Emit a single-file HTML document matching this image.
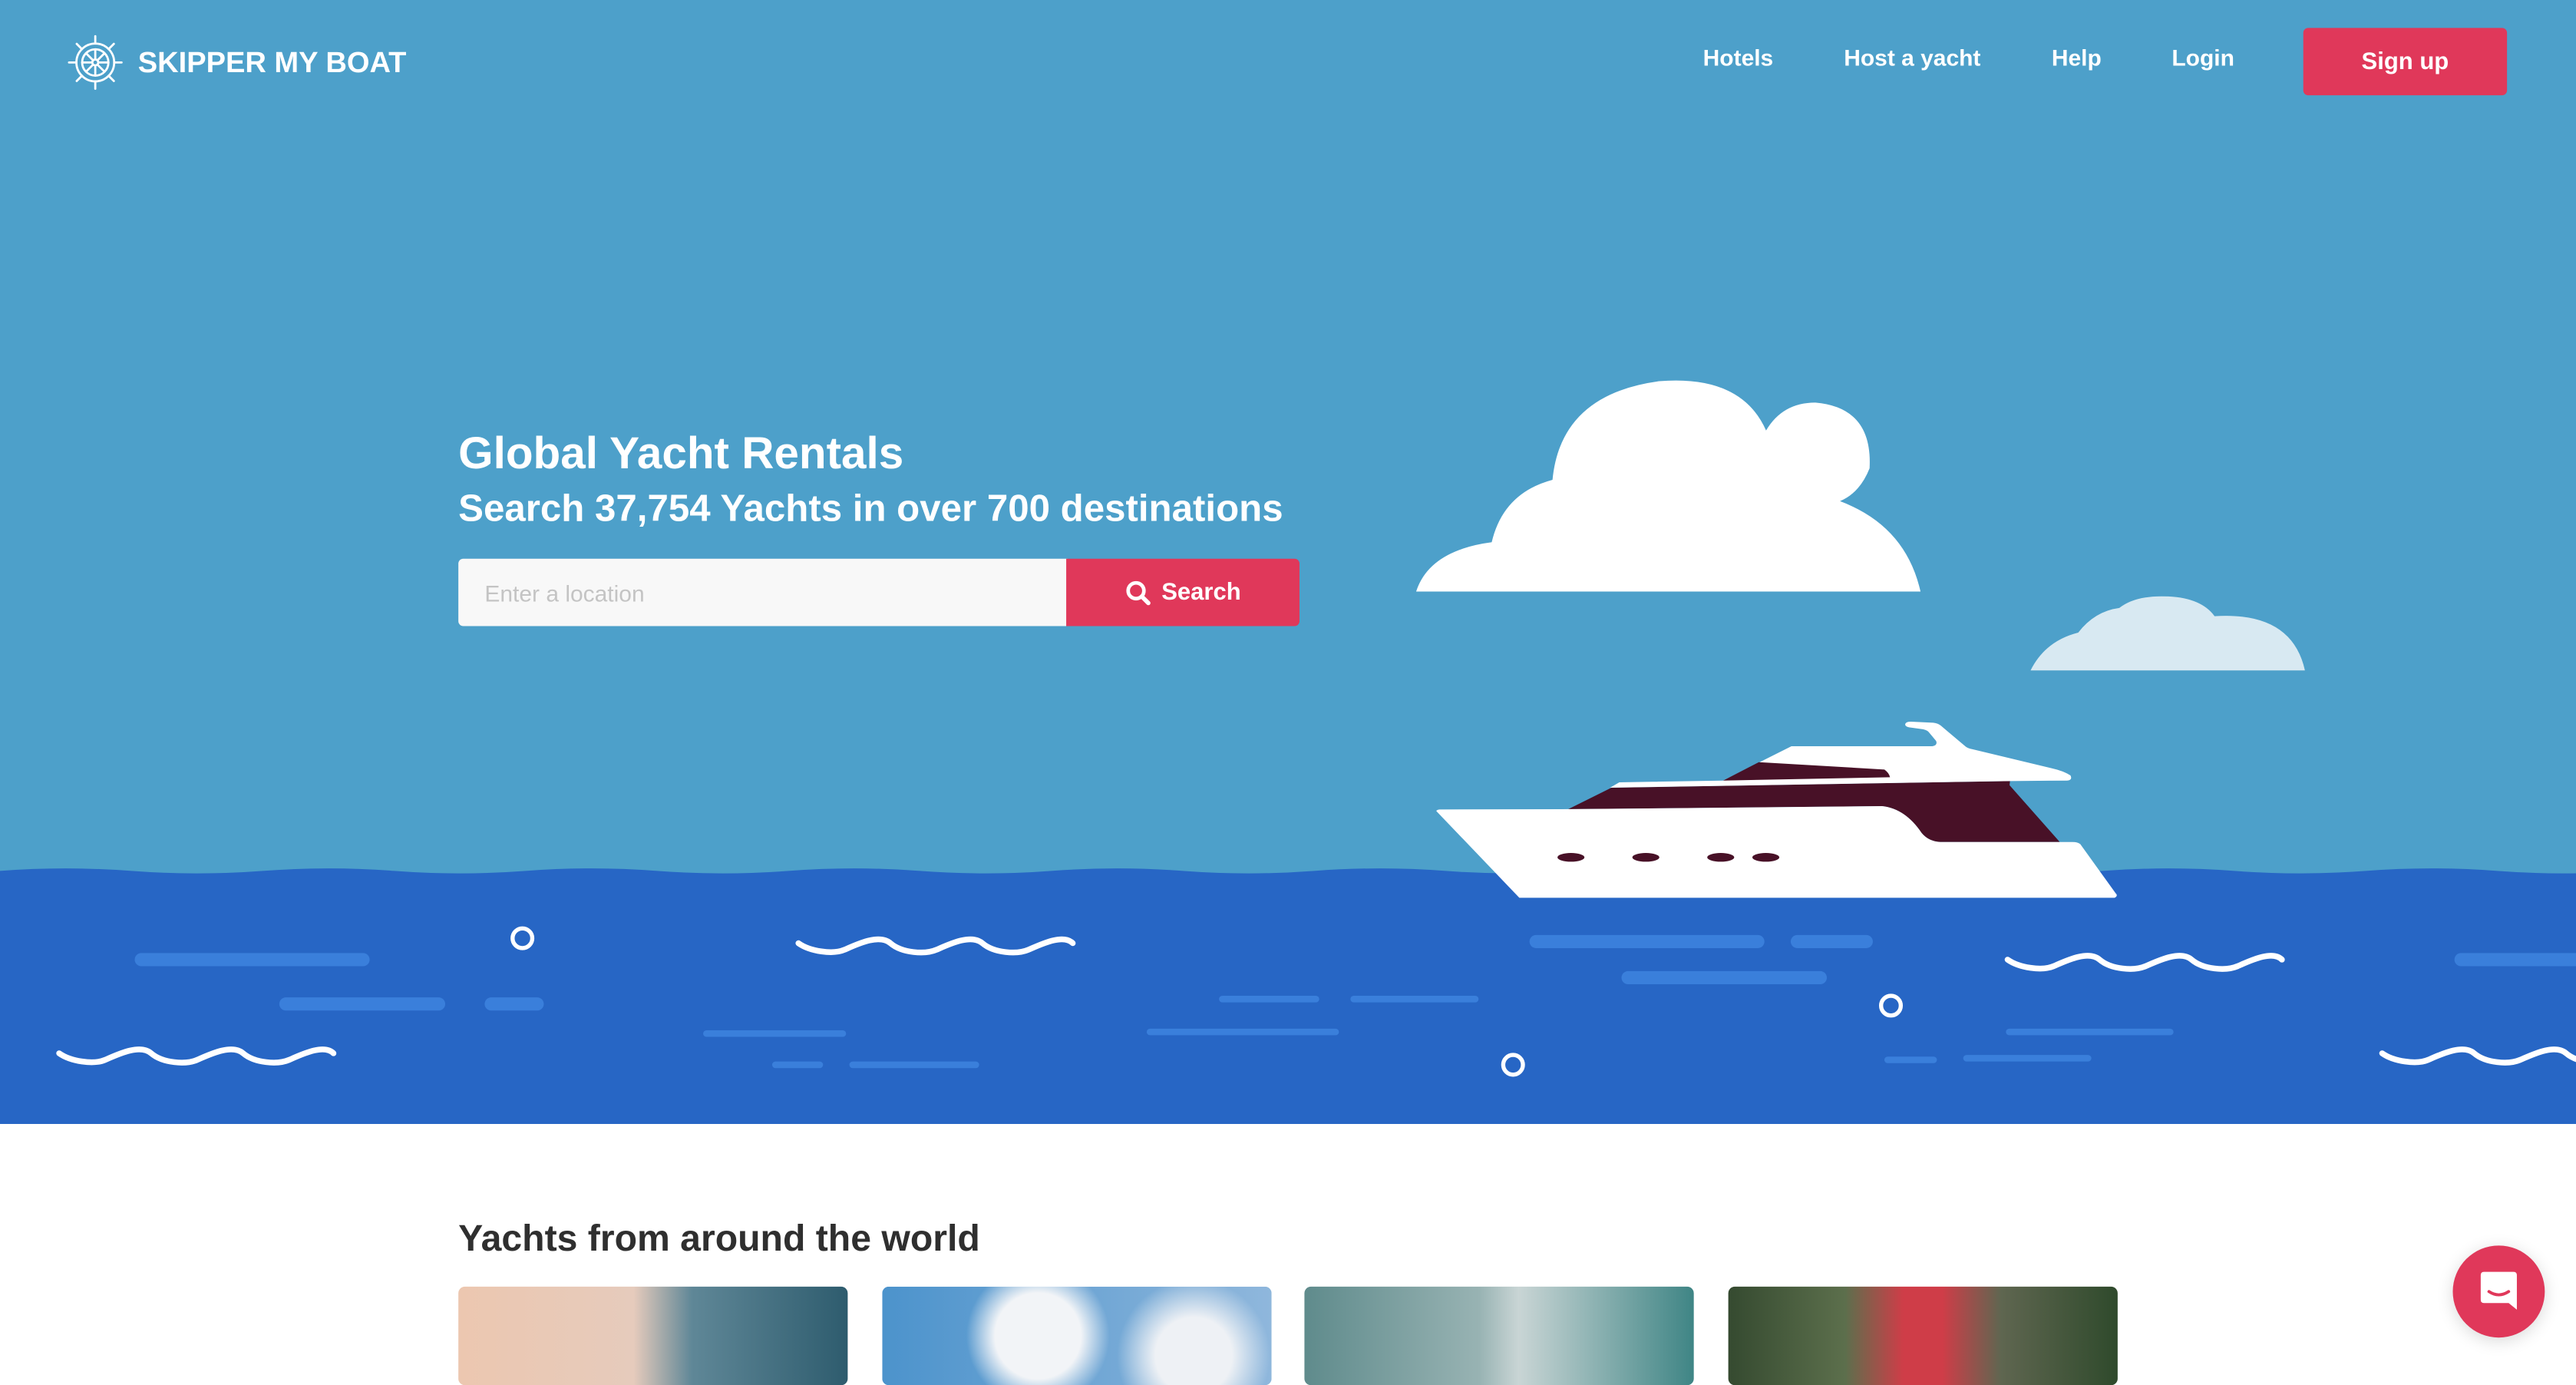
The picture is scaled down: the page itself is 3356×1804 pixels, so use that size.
<!DOCTYPE html>
<html><head><meta charset="utf-8">
<style>
*{margin:0;padding:0;box-sizing:border-box}
html,body{width:3356px;height:1782px;overflow:hidden;background:#fff}
#s{position:absolute;left:0;top:0;width:1568px;height:833px;transform:scale(2.14031);transform-origin:0 0;font-family:"Liberation Sans",Arial,sans-serif}
.abs{position:absolute}
.nav a{position:absolute;top:27px;color:#fff;font-size:14px;font-weight:bold;text-decoration:none;transform:translateX(-50%);white-space:nowrap}
</style></head><body><div id="s">
<svg class="abs" style="left:0;top:0" width="1568" height="833" viewBox="0 0 1568 833">
<rect width="1568" height="540" fill="#4da0ca"/>
<path d="M0,530 Q40,527 80,530 T160,530 T240,530 T320,530 T400,530 T480,530 T560,530 T640,530 T720,530 T800,530 T880,530 T960,530 T1040,530 T1120,530 T1200,530 T1280,530 T1360,530 T1440,530 T1520,530 T1600,530 L1600,684 L0,684 Z" fill="#2766c5"/>
<g stroke="#3a7fdb" stroke-width="8" stroke-linecap="round">
<line x1="86" y1="584" x2="221" y2="584"/><line x1="174" y1="611" x2="267" y2="611"/><line x1="299" y1="611" x2="327" y2="611"/>
<line x1="1498" y1="584" x2="1570" y2="584"/><line x1="935" y1="573" x2="1070" y2="573"/><line x1="1094" y1="573" x2="1136" y2="573"/><line x1="991" y1="595" x2="1108" y2="595"/>
</g>
<g stroke="#3a7fdb" stroke-width="4" stroke-linecap="round">
<line x1="430" y1="629" x2="513" y2="629"/><line x1="472" y1="648" x2="499" y2="648"/><line x1="519" y1="648" x2="594" y2="648"/>
<line x1="744" y1="608" x2="801" y2="608"/><line x1="824" y1="608" x2="898" y2="608"/><line x1="700" y1="628" x2="813" y2="628"/>
<line x1="1223" y1="628" x2="1321" y2="628"/><line x1="1149" y1="645" x2="1177" y2="645"/><line x1="1197" y1="644" x2="1271" y2="644"/>
</g>
<g fill="none" stroke="#fff" stroke-width="2.5">
<circle cx="318" cy="571" r="6"/><circle cx="1151" cy="612" r="6"/><circle cx="921" cy="648" r="6"/>
</g>
<g fill="none" stroke="#fff" stroke-width="3.5" stroke-linecap="round">
<path d="M486,574 c7,5 21,7 28,4 s21,-10 28,-4 s21,7 28,4 s21,-10 28,-4 s21,7 28,4 s21,-10 27,-4"/>
<path d="M36,641 c7,5 21,7 28,4 s21,-10 28,-4 s21,7 28,4 s21,-10 28,-4 s21,7 28,4 s21,-10 27,-4"/>
<path d="M1222,584 c7,5 21,7 28,4 s21,-10 28,-4 s21,7 28,4 s21,-10 28,-4 s21,7 28,4 s21,-10 27,-4"/>
<path d="M1450,641 c7,5 21,7 28,4 s21,-10 28,-4 s21,7 28,4 s21,-10 28,-4 s21,7 28,4"/>
</g>
<path d="M862,360 Q870,335 908,330 Q915,300 945,292 Q950,240 1010,232 Q1060,228 1075,262 Q1085,245 1105,245 Q1140,248 1138,285 Q1132,300 1120,305 Q1160,320 1169,360 Z" fill="#fff"/>
<path d="M1236,408 Q1245,390 1265,385 Q1275,372 1290,370 Q1300,362 1320,363 Q1340,364 1348,375 Q1395,372 1403,408 Z" fill="#d8e9f2"/>
<svg x="859.7" y="420.5" width="443.9" height="140.2" viewBox="0 0 1568 900" preserveAspectRatio="none">
<path d="M335,462 L428,378 L1285,352 L1284,368 L1392,590 L1135,590 Q1110,588 1095,555 Q1060,460 1010,450 Z" fill="#481127"/>
<path d="M52,470 L230,808 L1510,808 Q1518,800 1512,790 L1436,598 Q1430,590 1420,590 L1135,590 Q1110,588 1095,555 Q1060,460 1010,450 L320,462 L58,463 Q50,466 52,470 Z" fill="#fff"/>
<path d="M425,378 L445,357 L668,350 L815,216 L1118,216 Q1130,212 1126,195 L1110,160 Q1105,150 1092,148 L1068,142 Q1058,138 1060,128 Q1062,120 1072,120 L1120,124 Q1130,126 1136,135 L1190,218 Q1195,225 1205,228 L1375,302 Q1400,312 1415,330 Q1420,348 1408,350 L1285,352 Z" fill="#fff"/>
<path d="M668,350 L745,278 L1015,307 Q1025,320 1027,337 Z" fill="#481127"/>
<g fill="#481127"><ellipse cx="341" cy="650" rx="29" ry="17"/><ellipse cx="502" cy="650" rx="29" ry="17"/><ellipse cx="663" cy="650" rx="29" ry="17"/><ellipse cx="760" cy="650" rx="29" ry="17"/></g>
</svg>
<g transform="translate(58,38)" fill="none" stroke="#fff" stroke-width="1.3">
<circle r="11.5"/><circle r="8"/><circle r="1.8"/>
<g stroke-linecap="round"><path d="M0,-11.5V-16 M0,11.5V16 M-11.5,0H-16 M11.5,0H16 M8.1,-8.1L11.3,-11.3 M-8.1,-8.1L-11.3,-11.3 M8.1,8.1L11.3,11.3 M-8.1,8.1L-11.3,11.3"/>
<path d="M0,-2V-8 M0,2V8 M-2,0H-8 M2,0H8 M1.4,-1.4L5.6,-5.6 M-1.4,-1.4L-5.6,-5.6 M1.4,1.4L5.6,5.6 M-1.4,1.4L-5.6,5.6"/></g>
</g>
</svg>
<div class="abs" style="left:84px;top:28px;color:#fff;font-weight:bold;font-size:17.8px;white-space:nowrap">SKIPPER MY BOAT</div>
<div class="nav"><a style="left:1058px">Hotels</a><a style="left:1164px">Host a yacht</a><a style="left:1264px">Help</a><a style="left:1341px">Login</a></div>
<div class="abs" style="left:1402px;top:17px;width:124px;height:41px;background:#e0385a;border-radius:3px;color:#fff;font-weight:bold;font-size:14.5px;line-height:43px;text-align:center">Sign up</div>
<div class="abs" style="left:279px;top:260px;color:#fff;font-weight:bold;font-size:27.3px;white-space:nowrap">Global Yacht Rentals</div>
<div class="abs" style="left:279px;top:296px;color:#fff;font-weight:bold;font-size:23px;white-space:nowrap">Search 37,754 Yachts in over 700 destinations</div>
<div class="abs" style="left:279px;top:340px;width:371px;height:41px;background:#f8f8f8;border-radius:3px 0 0 3px;color:#c4c4c4;font-size:14px;line-height:42px;padding-left:16px">Enter a location</div>
<div class="abs" style="left:649px;top:340px;width:142px;height:41px;background:#e0385a;border-radius:0 3px 3px 0;color:#fff;font-weight:bold;font-size:14.5px;line-height:43px;padding-left:58px">Search
<svg class="abs" style="left:36px;top:13px" width="16" height="16" viewBox="0 0 16 16"><circle cx="6.5" cy="6.5" r="4.8" fill="none" stroke="#fff" stroke-width="2.2"/><path d="M10,10L14,14" stroke="#fff" stroke-width="2.6" stroke-linecap="round"/></svg></div>
<div class="abs" style="left:279px;top:741px;color:#2f2f2f;font-weight:bold;font-size:22.5px;white-space:nowrap">Yachts from around the world</div>
<div class="abs" style="left:279px;top:783px;width:237px;height:60px;border-radius:4px;background:linear-gradient(90deg,#ecc7b0 0%,#e6cbbc 45%,#5f8797 60%,#2e5c6e 100%)"></div>
<div class="abs" style="left:537px;top:783px;width:237px;height:60px;border-radius:4px;background:radial-gradient(circle at 40% 50%,#f2f4f7 0 18%,transparent 30%),radial-gradient(circle at 80% 70%,#eef1f5 0 12%,transparent 24%),linear-gradient(90deg,#4c93cc,#8fb7dc)"></div>
<div class="abs" style="left:794px;top:783px;width:237px;height:60px;border-radius:4px;background:linear-gradient(90deg,#5f8b8c 0%,#98b3b3 45%,#c9d5d5 55%,#3f8585 100%)"></div>
<div class="abs" style="left:1052px;top:783px;width:237px;height:60px;border-radius:4px;background:linear-gradient(90deg,#354a30 0%,#5c6f4c 30%,#cf3d48 45%,#cf3d48 55%,#5f6650 70%,#2f4a2c 100%)"></div>
<div class="abs" style="left:1493px;top:758px;width:56px;height:56px;border-radius:50%;background:#e0385a;box-shadow:0 2px 10px rgba(0,0,0,.15)">
<svg class="abs" style="left:16px;top:15px" width="24" height="26" viewBox="0 0 24 26"><path d="M3,1H21Q23,1 23,3V24L18,20H3Q1,20 1,18V3Q1,1 3,1Z" fill="#fff"/><path d="M6,13Q12,17 18,13" fill="none" stroke="#e0385a" stroke-width="1.8" stroke-linecap="round"/></svg></div>
</div></body></html>
